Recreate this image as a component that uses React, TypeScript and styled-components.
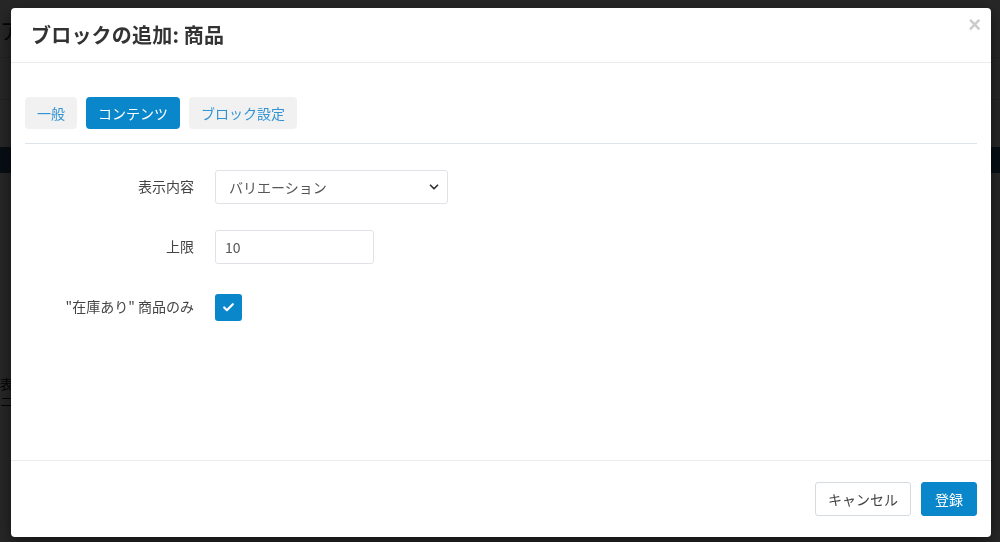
import React from "react";
import styled, { createGlobalStyle } from "styled-components";
import { Check, ChevronDown } from "lucide-react";

const GlobalStyle = createGlobalStyle`
  html, body {
    margin: 0;
    padding: 0;
    height: 100%;
  }
  body {
    background: #ffffff;
    font-family: "Noto Sans CJK JP", "Noto Sans", "Liberation Sans", sans-serif;
    color: #333333;
    overflow: hidden;
  }
  * {
    box-sizing: border-box;
  }
`;

// page sitting behind the dialog, only its edges show through the backdrop
const BackPage = styled.div`
  width: 1000px;
  height: 542px;
  display: flex;
  flex-direction: column;
`;

const BackHeader = styled.div`
  height: 58px;
  display: flex;
  align-items: center;
  border-bottom: 1px solid #dddddd;
  font-size: 22px;
  color: #222222;
`;

const BackToolbar = styled.div`
  height: 42px;
  border-bottom: 1px solid #dddddd;
`;

const BackNav = styled.div`
  margin-top: 47px;
  height: 26px;
  background: #2f5f80;
`;

const BackText = styled.div`
  margin-top: 204px;
  font-size: 13px;
  line-height: 13px;
  color: #111111;
  display: flex;
  flex-direction: column;
  gap: 4px;
`;

const Backdrop = styled.div`
  position: fixed;
  inset: 0;
  background: rgba(0, 0, 0, 0.85);
  padding: 8px 9px 5px 11px;
  display: flex;
`;

const Dialog = styled.div`
  flex: 1;
  display: flex;
  flex-direction: column;
  background: #ffffff;
  border-radius: 4px;
  box-shadow: 0 5px 15px rgba(0, 0, 0, 0.5);
`;

const Header = styled.div`
  height: 55px;
  display: flex;
  align-items: center;
  justify-content: space-between;
  padding: 0 10px 0 20px;
  border-bottom: 1px solid #e9ecef;
`;

const Title = styled.h4`
  margin: 0 0 1px;
  font-size: 20px;
  font-weight: 700;
  color: #333333;
  letter-spacing: 0.2px;
`;

const CloseButton = styled.button`
  align-self: flex-start;
  margin-top: 6px;
  padding: 0;
  border: 0;
  background: none;
  font-size: 22px;
  line-height: 22px;
  font-weight: 700;
  color: #cccccc;
  font-family: "Liberation Sans", sans-serif;
  cursor: pointer;
`;

const Body = styled.div`
  flex: 1;
  padding: 34px 14px 0;
`;

const Tabs = styled.div`
  display: flex;
  gap: 9px;
  padding-bottom: 14px;
  border-bottom: 1px solid #dde5ec;
`;

const Tab = styled.button<{ $active?: boolean }>`
  height: 32px;
  padding: 0 12px;
  border: 0;
  border-radius: 4px;
  font-family: inherit;
  font-size: 14px;
  cursor: pointer;
  background: ${(p) => (p.$active ? "#0a87cb" : "#f1f1f1")};
  color: ${(p) => (p.$active ? "#ffffff" : "#3193d4")};
`;

const Form = styled.div`
  display: grid;
  grid-template-columns: 169px 1fr;
  grid-auto-rows: 34px;
  column-gap: 21px;
  row-gap: 26px;
  align-items: center;
  padding-top: 26px;
`;

const Label = styled.label`
  text-align: right;
  font-size: 14px;
  color: #444444;
  margin-top: -3px;
`;

const SelectBox = styled.div<{ $width: number }>`
  width: ${(p) => p.$width}px;
  height: 34px;
  display: flex;
  align-items: center;
  justify-content: space-between;
  padding: 0 6px 0 13px;
  border: 1px solid #dfe3e8;
  border-radius: 3px;
  font-size: 14px;
  color: #555555;
`;

const TextInput = styled.input<{ $width: number }>`
  width: ${(p) => p.$width}px;
  height: 34px;
  padding: 0 9px;
  border: 1px solid #dfe3e8;
  border-radius: 3px;
  font-family: inherit;
  font-size: 14px;
  color: #555555;
  outline: none;
`;

const CheckBox = styled.span`
  width: 27px;
  height: 27px;
  display: flex;
  align-items: center;
  justify-content: center;
  border-radius: 3px;
  background: #0a87cb;
  color: #ffffff;
`;

const Footer = styled.div`
  display: flex;
  justify-content: flex-end;
  gap: 10px;
  padding: 21px 14px 21px;
  border-top: 1px solid #e9ecef;
`;

const Button = styled.button<{ $primary?: boolean }>`
  height: 34px;
  padding: 0 ${(p) => (p.$primary ? 13 : 12)}px;
  border-radius: 3px;
  font-family: inherit;
  font-size: 14px;
  cursor: pointer;
  border: 1px solid ${(p) => (p.$primary ? "#0a87cb" : "#d6dbe0")};
  background: ${(p) => (p.$primary ? "#0a87cb" : "#ffffff")};
  color: ${(p) => (p.$primary ? "#ffffff" : "#444444")};
`;

export default function App() {
  return (
    <>
      <GlobalStyle />
      <BackPage>
        <BackHeader>ア</BackHeader>
        <BackToolbar />
        <BackNav />
        <BackText>
          <span>表</span>
          <span>ニ</span>
        </BackText>
      </BackPage>
      <Backdrop>
        <Dialog>
          <Header>
            <Title>ブロックの追加: 商品</Title>
            <CloseButton>×</CloseButton>
          </Header>
          <Body>
            <Tabs>
              <Tab>一般</Tab>
              <Tab $active>コンテンツ</Tab>
              <Tab>ブロック設定</Tab>
            </Tabs>
            <Form>
              <Label>表示内容</Label>
              <SelectBox $width={233}>
                <span>バリエーション</span>
                <ChevronDown size={14} strokeWidth={3} color="#333333" />
              </SelectBox>
              <Label>上限</Label>
              <TextInput $width={159} defaultValue="10" />
              <Label>"在庫あり" 商品のみ</Label>
              <CheckBox>
                <Check size={13} strokeWidth={4} />
              </CheckBox>
            </Form>
          </Body>
          <Footer>
            <Button>キャンセル</Button>
            <Button $primary>登録</Button>
          </Footer>
        </Dialog>
      </Backdrop>
    </>
  );
}
